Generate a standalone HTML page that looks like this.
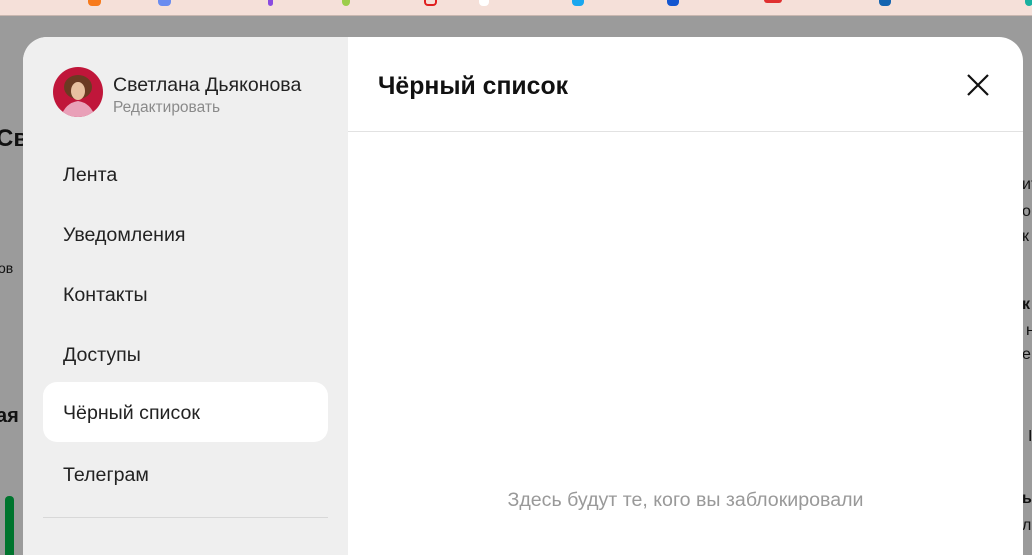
<!DOCTYPE html>
<html><head><meta charset="utf-8"><style>
*{margin:0;padding:0;box-sizing:border-box}
html{width:1032px;height:555px;overflow:hidden}
body{width:1032px;height:555px;overflow:hidden;background:#9b9b9b;font-family:"Liberation Sans","DejaVu Sans",sans-serif;position:relative}
.top{position:absolute;left:0;top:0;width:1032px;height:16px;background:#f5e0d9;border-bottom:1px solid #c9b7b0}
.ic{position:absolute;top:0;height:6px;width:13px;border-radius:0 0 4px 4px}
.bgt{position:absolute;color:#111;font-size:16px}
.modal{position:absolute;left:23px;top:37px;width:1000px;height:518px;border-radius:24px 24px 0 0;overflow:hidden;background:#fff}
.side{position:absolute;left:0;top:0;width:325px;height:100%;background:#efefef}
.av{position:absolute;left:30px;top:30px;width:50px;height:50px;border-radius:50%;background:#c0163a;overflow:hidden}
.name{position:absolute;left:90px;top:37px;font-size:19.5px;color:#222}
.edit{position:absolute;left:90px;top:62px;font-size:15.5px;color:#8a8a8a}
.item{position:absolute;left:20px;width:285px;height:60px;line-height:62px;padding-left:20px;font-size:19.6px;color:#222;border-radius:14px}
.sel{background:#fff}
.sep{position:absolute;left:20px;top:480px;width:285px;height:1px;background:#d8d8d8}
.title{position:absolute;left:355px;top:36px;font-size:24.8px;font-weight:bold;color:#111}
.hline{position:absolute;left:325px;top:94px;width:675px;height:1px;background:#e2e2e2}
.close{position:absolute;left:943px;top:36px}
.empty{position:absolute;left:325px;width:675px;top:452px;text-align:center;font-size:19.6px;color:#999}
</style></head><body>
<div class="top">
<div class="ic" style="left:88px;background:#f77a1c"></div>
<div class="ic" style="left:158px;background:#6a8cf0"></div>
<div class="ic" style="left:268px;width:5px;background:#8a4be0"></div>
<div class="ic" style="left:342px;width:8px;background:#9ccd4a"></div>
<div class="ic" style="left:424px;background:none;border:2px solid #e02020;border-top:none"></div>
<div class="ic" style="left:479px;width:10px;background:#fff"></div>
<div class="ic" style="left:572px;width:12px;background:#1aa7ef"></div>
<div class="ic" style="left:667px;width:12px;background:#1456d0"></div>
<div class="ic" style="left:764px;width:18px;height:3px;background:#e03030"></div>
<div class="ic" style="left:879px;width:12px;background:#1464b0"></div>
<div class="ic" style="left:1025px;width:8px;background:#19b0a0"></div>
</div>
<div class="bgt" style="left:-4px;top:125px;font-size:24px;font-weight:bold">Св</div>
<div class="bgt" style="left:-2px;top:260px;font-size:14px">ов</div>
<div class="bgt" style="left:-4px;top:405px;font-size:20px;font-weight:bold">ая</div>
<div style="position:absolute;left:5px;top:496px;width:9px;height:60px;background:#00742e;border-radius:4px 4px 0 0"></div>
<div class="bgt" style="left:1022px;top:176px">ит</div>
<div class="bgt" style="left:1022px;top:203px">о</div>
<div class="bgt" style="left:1022px;top:228px">к</div>
<div class="bgt" style="left:1022px;top:296px;font-weight:bold">к</div>
<div class="bgt" style="left:1026px;top:322px">н</div>
<div class="bgt" style="left:1022px;top:346px">е</div>
<div class="bgt" style="left:1028px;top:428px">I</div>
<div class="bgt" style="left:1022px;top:490px;font-weight:bold">ы</div>
<div class="bgt" style="left:1022px;top:517px">л</div>
<div class="modal">
<div class="side">
<div class="av"><svg width="50" height="50"><ellipse cx="25" cy="20" rx="14" ry="12" fill="#6b3a22"/><ellipse cx="25" cy="24" rx="7" ry="9" fill="#e8c0a0"/><path d="M8 50 Q12 36 25 34 Q38 36 42 50Z" fill="#e9a0b8"/></svg></div>
<div class="name">Светлана Дьяконова</div>
<div class="edit">Редактировать</div>
<div class="item" style="top:107px">Лента</div>
<div class="item" style="top:167px">Уведомления</div>
<div class="item" style="top:227px">Контакты</div>
<div class="item" style="top:287px">Доступы</div>
<div class="item sel" style="top:345px">Чёрный список</div>
<div class="item" style="top:407px">Телеграм</div>
<div class="sep"></div>
</div>
<div class="title">Чёрный список</div>
<svg class="close" width="24" height="24"><path d="M2 2L22 22M22 2L2 22" stroke="#111" stroke-width="2.2"/></svg>
<div class="hline"></div>
<div class="empty">Здесь будут те, кого вы заблокировали</div>
</div>
</body></html>
